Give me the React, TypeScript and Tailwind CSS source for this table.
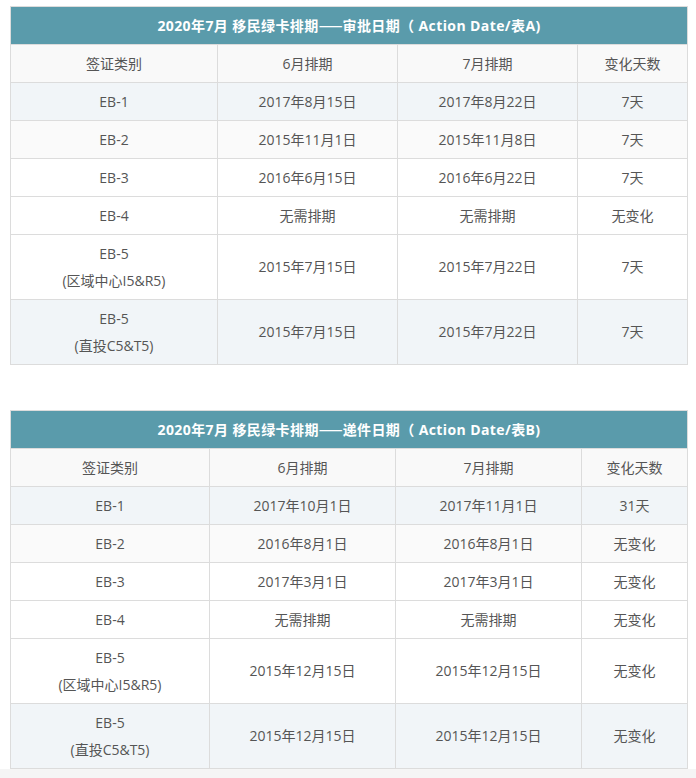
import React from "react";

type Row = { visa: string[]; june: string; july: string; diff: string; bg: string };

const cell = "border border-[#dcdcdc] px-2 py-[4.5px] text-center align-middle leading-[28px]";

const tableA: Row[] = [
  { visa: ["EB-1"], june: "2017年8月15日", july: "2017年8月22日", diff: "7天", bg: "bg-[#f1f5f8]" },
  { visa: ["EB-2"], june: "2015年11月1日", july: "2015年11月8日", diff: "7天", bg: "bg-[#fafafa]" },
  { visa: ["EB-3"], june: "2016年6月15日", july: "2016年6月22日", diff: "7天", bg: "bg-white" },
  { visa: ["EB-4"], june: "无需排期", july: "无需排期", diff: "无变化", bg: "bg-white" },
  { visa: ["EB-5", "(区域中心I5&R5)"], june: "2015年7月15日", july: "2015年7月22日", diff: "7天", bg: "bg-white" },
  { visa: ["EB-5", "(直投C5&T5)"], june: "2015年7月15日", july: "2015年7月22日", diff: "7天", bg: "bg-[#f1f5f8]" },
];

const tableB: Row[] = [
  { visa: ["EB-1"], june: "2017年10月1日", july: "2017年11月1日", diff: "31天", bg: "bg-[#f1f5f8]" },
  { visa: ["EB-2"], june: "2016年8月1日", july: "2016年8月1日", diff: "无变化", bg: "bg-[#fafafa]" },
  { visa: ["EB-3"], june: "2017年3月1日", july: "2017年3月1日", diff: "无变化", bg: "bg-white" },
  { visa: ["EB-4"], june: "无需排期", july: "无需排期", diff: "无变化", bg: "bg-white" },
  { visa: ["EB-5", "(区域中心I5&R5)"], june: "2015年12月15日", july: "2015年12月15日", diff: "无变化", bg: "bg-white" },
  { visa: ["EB-5", "(直投C5&T5)"], june: "2015年12月15日", july: "2015年12月15日", diff: "无变化", bg: "bg-[#f1f5f8]" },
];

function ScheduleTable({ kind, suffix, rows, widths }: { kind: string; suffix: string; rows: Row[]; widths: string[] }) {
  return (
    <table className="w-[677px] table-fixed border-collapse text-[14px] text-[#555]">
      <colgroup>
        {widths.map((w, i) => (
          <col key={i} className={w} />
        ))}
      </colgroup>
      <thead>
        <tr>
          <th colSpan={4} className="border border-[#dcdcdc] bg-[#5a9bab] py-[4.5px] text-center font-bold leading-[28px] tracking-[0.4px] text-white">
            2020年7月 移民绿卡排期
            <span className="font-['Noto_Sans_CJK_SC',sans-serif] leading-none tracking-normal">——</span>
            {kind}（ Action Date/表{suffix})
          </th>
        </tr>
        <tr className="bg-[#f9f9f9]">
          <td className={cell}>签证类别</td>
          <td className={cell}>6月排期</td>
          <td className={cell}>7月排期</td>
          <td className={cell}>变化天数</td>
        </tr>
      </thead>
      <tbody>
        {rows.map((r, i) => (
          <tr key={i} className={r.bg}>
            <td className={cell}>
              {r.visa.map((line) => (
                <div key={line} className={r.visa.length > 1 ? "leading-[27.5px]" : ""}>
                  {line}
                </div>
              ))}
            </td>
            <td className={cell}>{r.june}</td>
            <td className={cell}>{r.july}</td>
            <td className={cell}>{r.diff}</td>
          </tr>
        ))}
      </tbody>
    </table>
  );
}

export default function App() {
  return (
    <div className="w-[696px] bg-white font-['Open_Sans','Noto_Sans_CJK_SC',sans-serif]">
      <div className="flex flex-col gap-[45px] pl-[10px] pt-[6px]">
        <ScheduleTable kind="审批日期" suffix="A" rows={tableA} widths={["w-[207px]", "w-[180px]", "w-[180px]", "w-[110px]"]} />
        <ScheduleTable kind="递件日期" suffix="B" rows={tableB} widths={["w-[199px]", "w-[186px]", "w-[186px]", "w-[106px]"]} />
      </div>
      <div className="h-[20px] bg-[#f5f5f5]" />
    </div>
  );
}
